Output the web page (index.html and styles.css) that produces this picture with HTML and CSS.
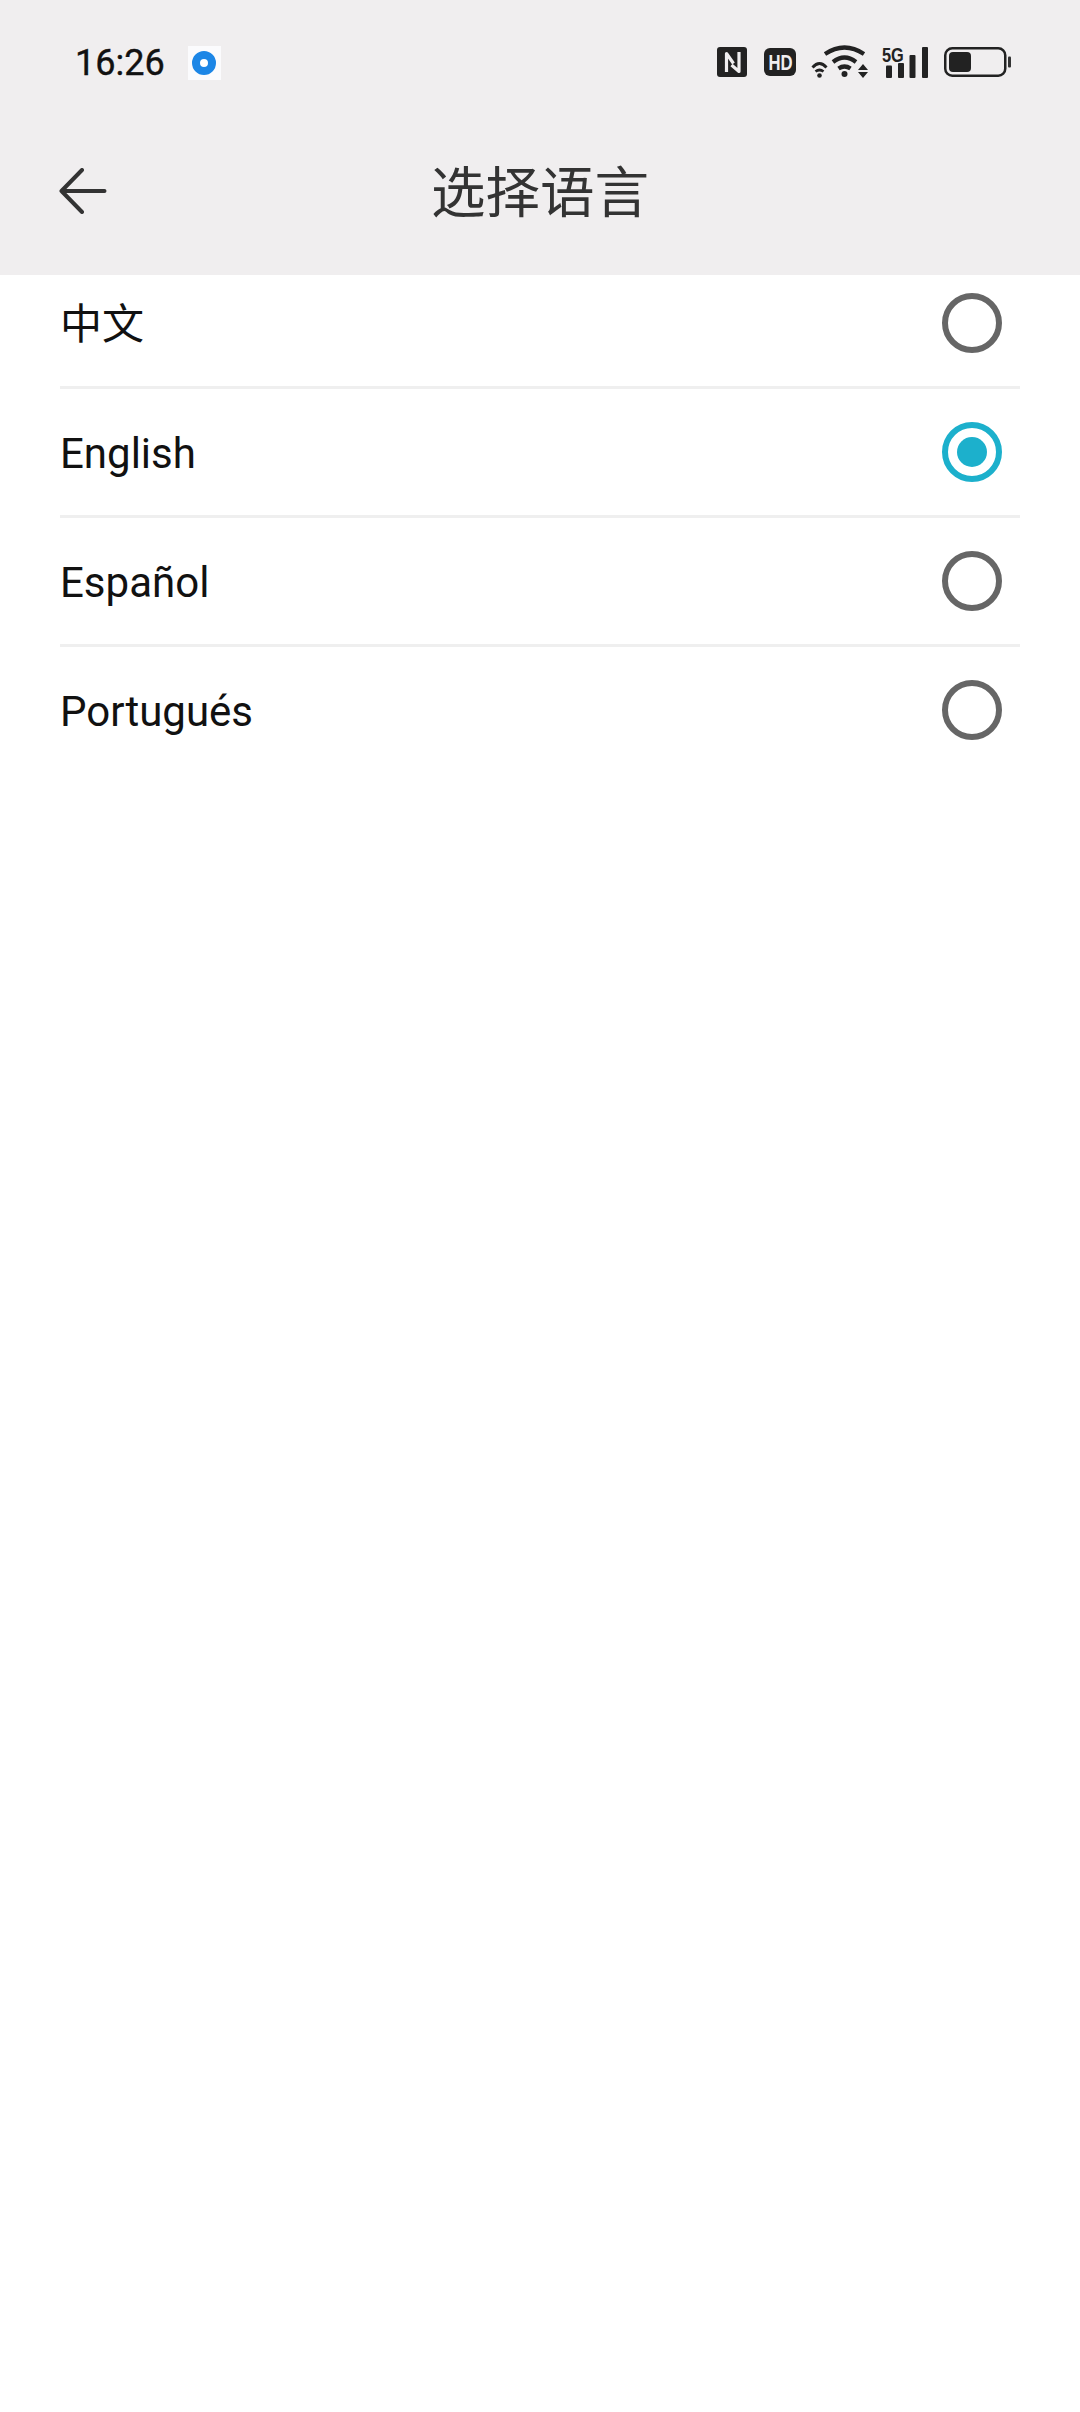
FILE: index.html
```html
<!DOCTYPE html>
<html lang="zh">
<head>
<meta charset="utf-8">
<title>选择语言</title>
<link rel="stylesheet" href="styles.css">
</head>
<body>
<header class="top">
  <div class="status">
    <div class="status-left">
      <span class="time">16:26</span>
      <span class="app-icon"><span class="app-ring"></span></span>
    </div>
    <div class="status-right">
      <svg class="i-nfc" width="30" height="30" viewBox="0 0 30 30"><rect width="30" height="30" rx="3" fill="#222"/><path d="M9.500 25V6.500L16.500 16.500M22 5V24.500L14.500 18" fill="none" stroke="#f0eeef" stroke-width="3.200" stroke-linejoin="round"/></svg>
      <svg class="i-hd" width="32" height="28" viewBox="0 0 32 28"><rect width="32" height="28" rx="6" fill="#222"/><text transform="translate(4.500 22) scale(.76 1)" class="hd-text">HD</text></svg>
      <svg class="i-wifi" width="58" height="34" viewBox="0 0 58 34"><g fill="none" stroke="#222" stroke-width="4.200"><path d="M15 10Q34.500-3 54 10"/><path d="M23 18Q34.500 9 46 18"/><path d="M28.500 24.500Q34.500 20.500 40.500 24.500"/></g><g fill="none" stroke="#222" stroke-width="2.800"><path d="M2.500 23.500Q9.500 15.500 16.500 23.500"/><path d="M5.500 27.500Q9.500 24.500 13.500 27.500"/></g><circle cx="34.500" cy="30" r="3" fill="#222"/><circle cx="9.500" cy="31.500" r="2.300" fill="#222"/><path d="M48 26h10l-5-6zM48 28h10l-5 6z" fill="#222"/></svg>
      <svg class="i-signal" width="46" height="37" viewBox="0 -4 46 37"><text transform="translate(0 17) scale(.78 1)" class="fg-text">5G</text><g fill="#222"><rect x="4" y="20.500" width="6" height="12.500" rx="1"/><rect x="16" y="18" width="6" height="15" rx="1"/><rect x="27.500" y="10" width="6" height="23" rx="1"/><rect x="40" y="2" width="6" height="31" rx="1"/></g></svg>
      <svg class="i-battery" width="67" height="30" viewBox="0 0 67 30"><rect x="1.250" y="1.250" width="60" height="27.500" rx="7" fill="none" stroke="#222" stroke-width="2.500"/><rect x="5" y="5" width="22" height="20" rx="4" fill="#222"/><rect x="64" y="9.500" width="3" height="11" rx="1" fill="#333"/></svg>
    </div>
  </div>
  <div class="titlebar">
    <svg class="back" width="48" height="46" viewBox="0 0 48 46"><path d="M23 2 2.500 23 23 44M2.500 23H45.500" fill="none" stroke="#333" stroke-width="4" stroke-linecap="round" stroke-linejoin="round"/></svg>
    <h1 class="title">选择语言</h1>
  </div>
</header>
<main class="list">
  <div class="row"><span class="label">中文</span><span class="radio"></span></div>
  <div class="row"><span class="label">English</span><span class="radio radio-on"></span></div>
  <div class="row"><span class="label">Español</span><span class="radio"></span></div>
  <div class="row"><span class="label">Portugués</span><span class="radio"></span></div>
</main>
</body>
</html>
```
FILE: styles.css
```css
* { box-sizing: border-box; }
html, body { margin: 0; padding: 0; }
body {
  width: 1080px;
  height: 2412px;
  overflow: hidden;
  background: #fff;
  font-family: Roboto, "Noto Sans CJK SC", sans-serif;
}
.top {
  position: relative;
  z-index: 1;
  height: 275px;
  background: #f0eeef;
}
.status {
  height: 124px;
  display: flex;
  justify-content: space-between;
  align-items: center;
  padding: 0 69px 0 75px;
}
.status-left { display: flex; align-items: center; gap: 23px; padding-top: 2px; }
.time { font-size: 36px; font-weight: 400; color: #111; line-height: 1; -webkit-text-stroke: 0.4px #111; }
.app-icon {
  width: 33px;
  height: 34px;
  background: #fbfbfd;
  display: flex;
  align-items: center;
  justify-content: center;
}
.app-ring {
  width: 24px;
  height: 24px;
  border-radius: 50%;
  border: 8px solid #1c86e6;
  background: #fff;
}
.status-right { display: flex; align-items: center; gap: 14px; }
.status-right svg { display: block; }
.i-nfc { margin-right: 3px; }
.i-wifi { margin-bottom: 2px; }
.i-signal { margin-top: -5px; }
.i-battery { margin-left: 2px; }
.hd-text { font: 700 22px "Liberation Sans", sans-serif; fill: #f0eeef; }
.fg-text { font: 700 21px "Liberation Sans", sans-serif; fill: #222; }
.titlebar {
  height: 138px;
  display: grid;
  grid-template-columns: 1fr auto 1fr;
  align-items: center;
}
.back { margin-left: 59px; margin-top: -4px; }
.title {
  margin: 0 0 8px;
  font-size: 54.5px;
  font-weight: 400;
  color: #333;
  font-family: "Noto Sans CJK SC", sans-serif;
  line-height: 1;
}
.list {
  margin-top: -15px;
  padding-left: 60px;
  padding-right: 60px;
}
.row {
  height: 129px;
  display: flex;
  align-items: center;
  justify-content: space-between;
  border-bottom: 3px solid #efefef;
  padding-right: 18px;
}
.row:last-child { border-bottom-color: transparent; }
.label { font-size: 42px; color: #111; line-height: 1; padding-top: 3px; }
.radio {
  width: 60px;
  height: 60px;
  border-radius: 50%;
  border: 6px solid #666;
  background: #fff;
  display: flex;
  align-items: center;
  justify-content: center;
}
.radio-on { border-color: #1cb0cc; }
.radio-on::after {
  content: "";
  width: 30px;
  height: 30px;
  border-radius: 50%;
  background: #1cb0cc;
}
```
